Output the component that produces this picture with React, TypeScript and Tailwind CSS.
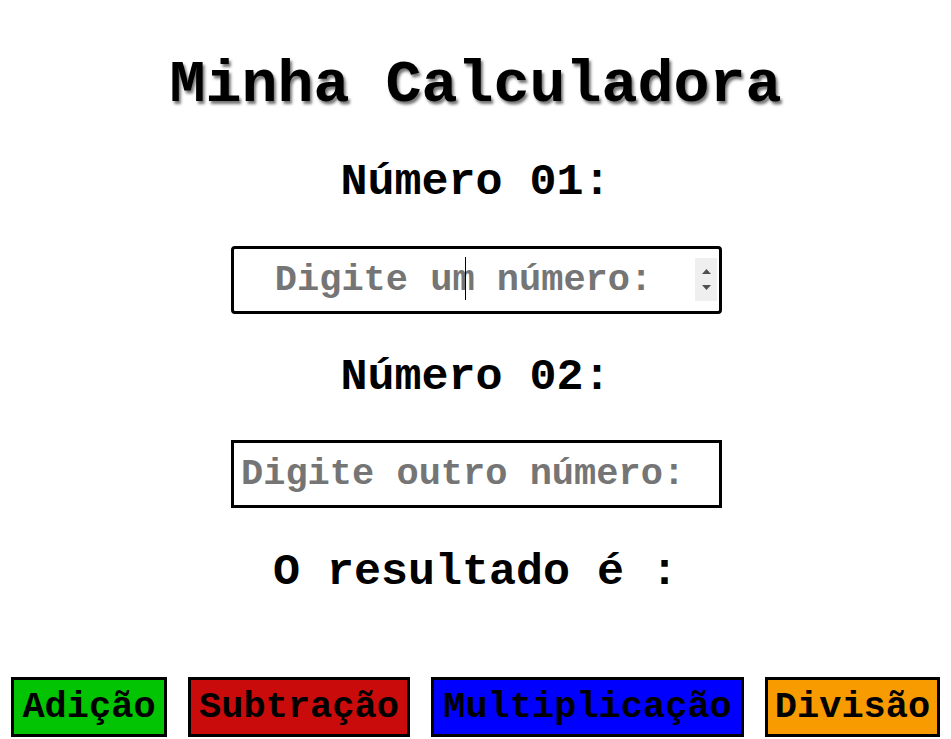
import React from "react";

const mono = "font-['Liberation_Mono','Courier_New',monospace] font-bold";

export default function App() {
  return (
    <div className={`min-h-[739px] w-full bg-white text-black ${mono} flex flex-col items-center`}>
      <h1 className="mt-[55px] h-[60px] text-[60px] leading-none [text-shadow:2px_3px_3px_rgba(0,0,0,0.55)]">
        Minha Calculadora
      </h1>

      <label className="mt-[45px] h-[45px] text-[45px] leading-none">Número 01:</label>

      <div className="relative ml-[2px] mt-[41px] h-[68px] w-[491px]">
        <input
          type="text"
          placeholder="Digite um número:"
          className={`h-full w-full rounded-[4px] border-[3px] border-black bg-white pr-[26px] text-center text-[37px] outline-none placeholder:text-[#757575] ${mono}`}
        />
        <div className="pointer-events-none absolute left-[234px] top-[11px] h-[43px] w-px bg-black" />
        <div className="pointer-events-none absolute right-[5px] top-[12px] flex h-[43px] w-[22px] flex-col items-center justify-center gap-[11px] bg-[#efefef]">
          <svg width="9" height="5" viewBox="0 0 9 5">
            <path d="M0 5 L4.5 0 L9 5 Z" fill="#505050" />
          </svg>
          <svg width="9" height="5" viewBox="0 0 9 5">
            <path d="M0 0 L4.5 5 L9 0 Z" fill="#505050" />
          </svg>
        </div>
      </div>

      <label className="mt-[41px] h-[45px] text-[45px] leading-none">Número 02:</label>

      <input
        type="text"
        placeholder="Digite outro número:"
        className={`ml-[2px] mt-[40px] h-[68px] w-[491px] border-[3px] border-black bg-white pl-[7px] text-left text-[37px] outline-none placeholder:text-[#757575] ${mono}`}
      />

      <p className="mt-[42px] h-[45px] text-[45px] leading-none">O resultado é :</p>

      <div className="mt-[82px] flex w-full items-center justify-start gap-[21px] pl-[11px]">
        <button className={`h-[60px] w-[156px] border-[3px] border-black bg-[#02c402] p-0 text-center text-[37px] leading-none text-black ${mono}`}>
          Adição
        </button>
        <button className={`h-[60px] w-[222px] border-[3px] border-black bg-[#c90b0b] p-0 text-center text-[37px] leading-none text-black ${mono}`}>
          Subtração
        </button>
        <button className={`h-[60px] w-[313px] border-[3px] border-black bg-[#0000ff] p-0 text-center text-[37px] leading-none text-black ${mono}`}>
          Multiplicação
        </button>
        <button className={`h-[60px] w-[175px] border-[3px] border-black bg-[#f79b00] p-0 text-center text-[37px] leading-none text-black ${mono}`}>
          Divisão
        </button>
      </div>
    </div>
  );
}
